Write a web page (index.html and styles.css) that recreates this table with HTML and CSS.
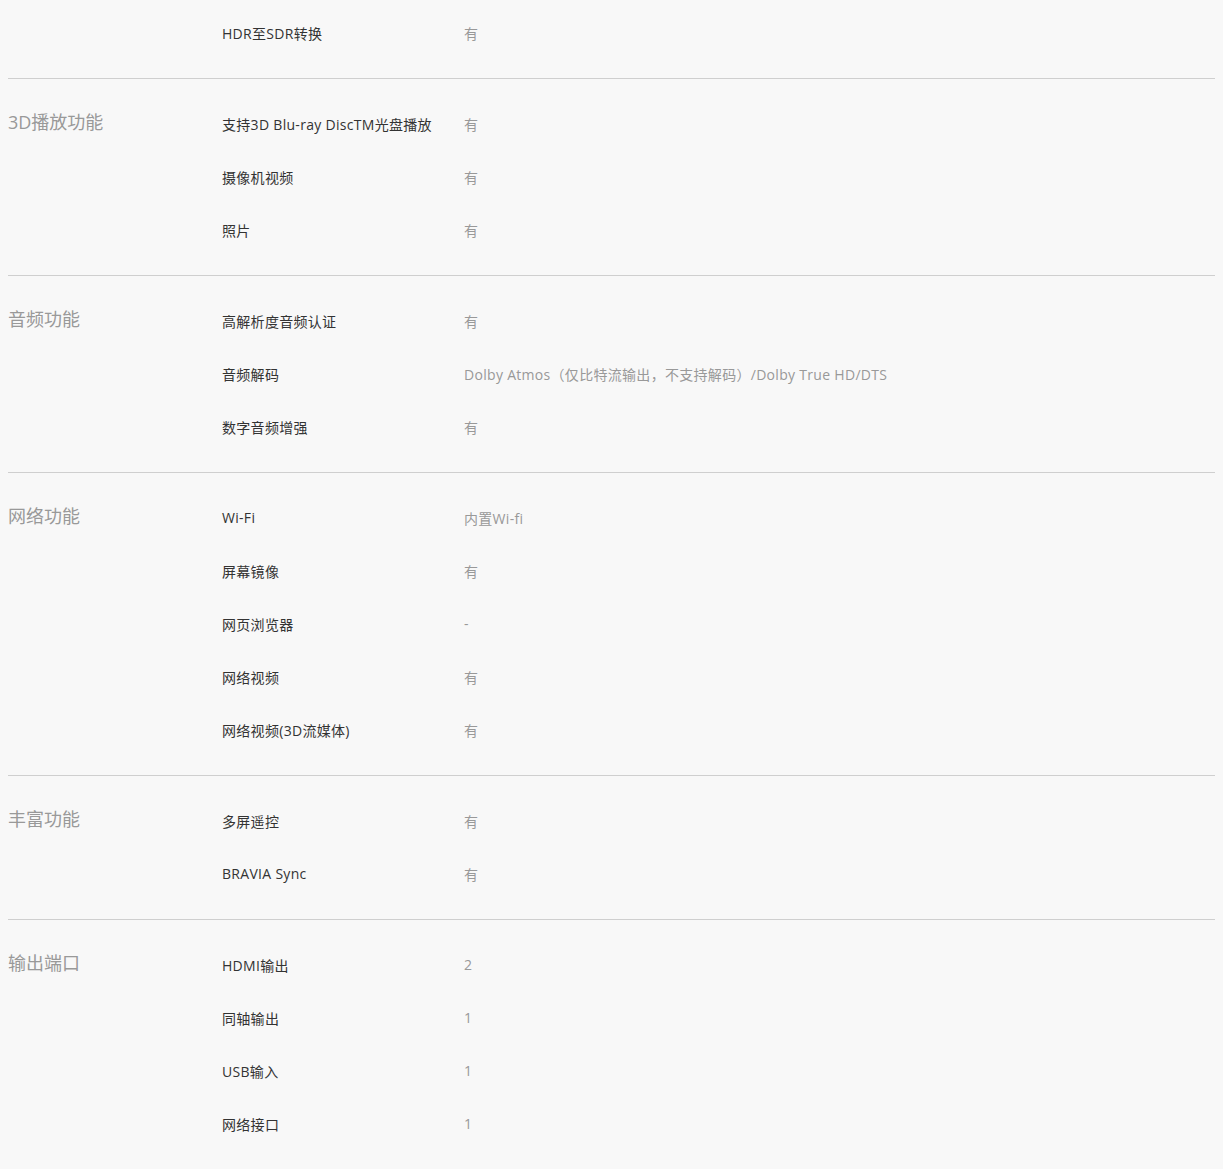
FILE: index.html
```html
<!DOCTYPE html>
<html lang="zh-CN">
<head>
    <meta charset="UTF-8">
    <title>规格参数</title>
    <link rel="stylesheet" href="styles.css">
</head>
<body>
    <div class="spec-list">
        <div class="spec-group spec-group-first">
            <div class="spec-title"></div>
            <div class="spec-rows">
                <div class="spec-row"><span class="spec-name">HDR至SDR转换</span><span class="spec-value">有</span></div>
            </div>
        </div>

        <div class="spec-group">
            <div class="spec-title">3D播放功能</div>
            <div class="spec-rows">
                <div class="spec-row"><span class="spec-name">支持3D Blu-ray DiscTM光盘播放</span><span class="spec-value">有</span></div>
                <div class="spec-row"><span class="spec-name">摄像机视频</span><span class="spec-value">有</span></div>
                <div class="spec-row"><span class="spec-name">照片</span><span class="spec-value">有</span></div>
            </div>
        </div>

        <div class="spec-group">
            <div class="spec-title">音频功能</div>
            <div class="spec-rows">
                <div class="spec-row"><span class="spec-name">高解析度音频认证</span><span class="spec-value">有</span></div>
                <div class="spec-row"><span class="spec-name">音频解码</span><span class="spec-value">Dolby Atmos（仅比特流输出，不支持解码）/Dolby True HD/DTS</span></div>
                <div class="spec-row"><span class="spec-name">数字音频增强</span><span class="spec-value">有</span></div>
            </div>
        </div>

        <div class="spec-group">
            <div class="spec-title">网络功能</div>
            <div class="spec-rows">
                <div class="spec-row"><span class="spec-name">Wi-Fi</span><span class="spec-value">内置Wi-fi</span></div>
                <div class="spec-row"><span class="spec-name">屏幕镜像</span><span class="spec-value">有</span></div>
                <div class="spec-row"><span class="spec-name">网页浏览器</span><span class="spec-value">-</span></div>
                <div class="spec-row"><span class="spec-name">网络视频</span><span class="spec-value">有</span></div>
                <div class="spec-row"><span class="spec-name">网络视频(3D流媒体)</span><span class="spec-value">有</span></div>
            </div>
        </div>

        <div class="spec-group">
            <div class="spec-title">丰富功能</div>
            <div class="spec-rows">
                <div class="spec-row"><span class="spec-name">多屏遥控</span><span class="spec-value">有</span></div>
                <div class="spec-row"><span class="spec-name">BRAVIA Sync</span><span class="spec-value">有</span></div>
            </div>
        </div>

        <div class="spec-group spec-group-last">
            <div class="spec-title">输出端口</div>
            <div class="spec-rows">
                <div class="spec-row"><span class="spec-name">HDMI输出</span><span class="spec-value">2</span></div>
                <div class="spec-row"><span class="spec-name">同轴输出</span><span class="spec-value">1</span></div>
                <div class="spec-row"><span class="spec-name">USB输入</span><span class="spec-value">1</span></div>
                <div class="spec-row"><span class="spec-name">网络接口</span><span class="spec-value">1</span></div>
            </div>
        </div>
    </div>
</body>
</html>
```

FILE: styles.css
```css
* {
    margin: 0;
    padding: 0;
    box-sizing: border-box;
}

body {
    background-color: #f8f8f8;
    margin: 8px;
    font-family: 'Open Sans', 'Noto Sans CJK SC', sans-serif;
}

.spec-list {
    width: 1210px;
}

.spec-group {
    display: flex;
    padding: 20px 0 17px;
    border-bottom: 1px solid #cfcfcf;
}

.spec-group-first {
    padding-top: 0;
}

.spec-group-last {
    border-bottom: none;
}

.spec-title {
    width: 214px;
    flex-shrink: 0;
    padding-top: 11px;
    font-size: 18px;
    line-height: 24px;
    color: #999;
}

.spec-rows {
    flex: 1;
    display: flex;
    flex-direction: column;
}

.spec-row {
    display: flex;
    align-items: center;
    height: 53px;
    padding-bottom: 4px;
    font-size: 14px;
    letter-spacing: 0.3px;
}

.spec-name {
    width: 242px;
    flex-shrink: 0;
    color: #333;
}

.spec-value {
    color: #999;
}
```
